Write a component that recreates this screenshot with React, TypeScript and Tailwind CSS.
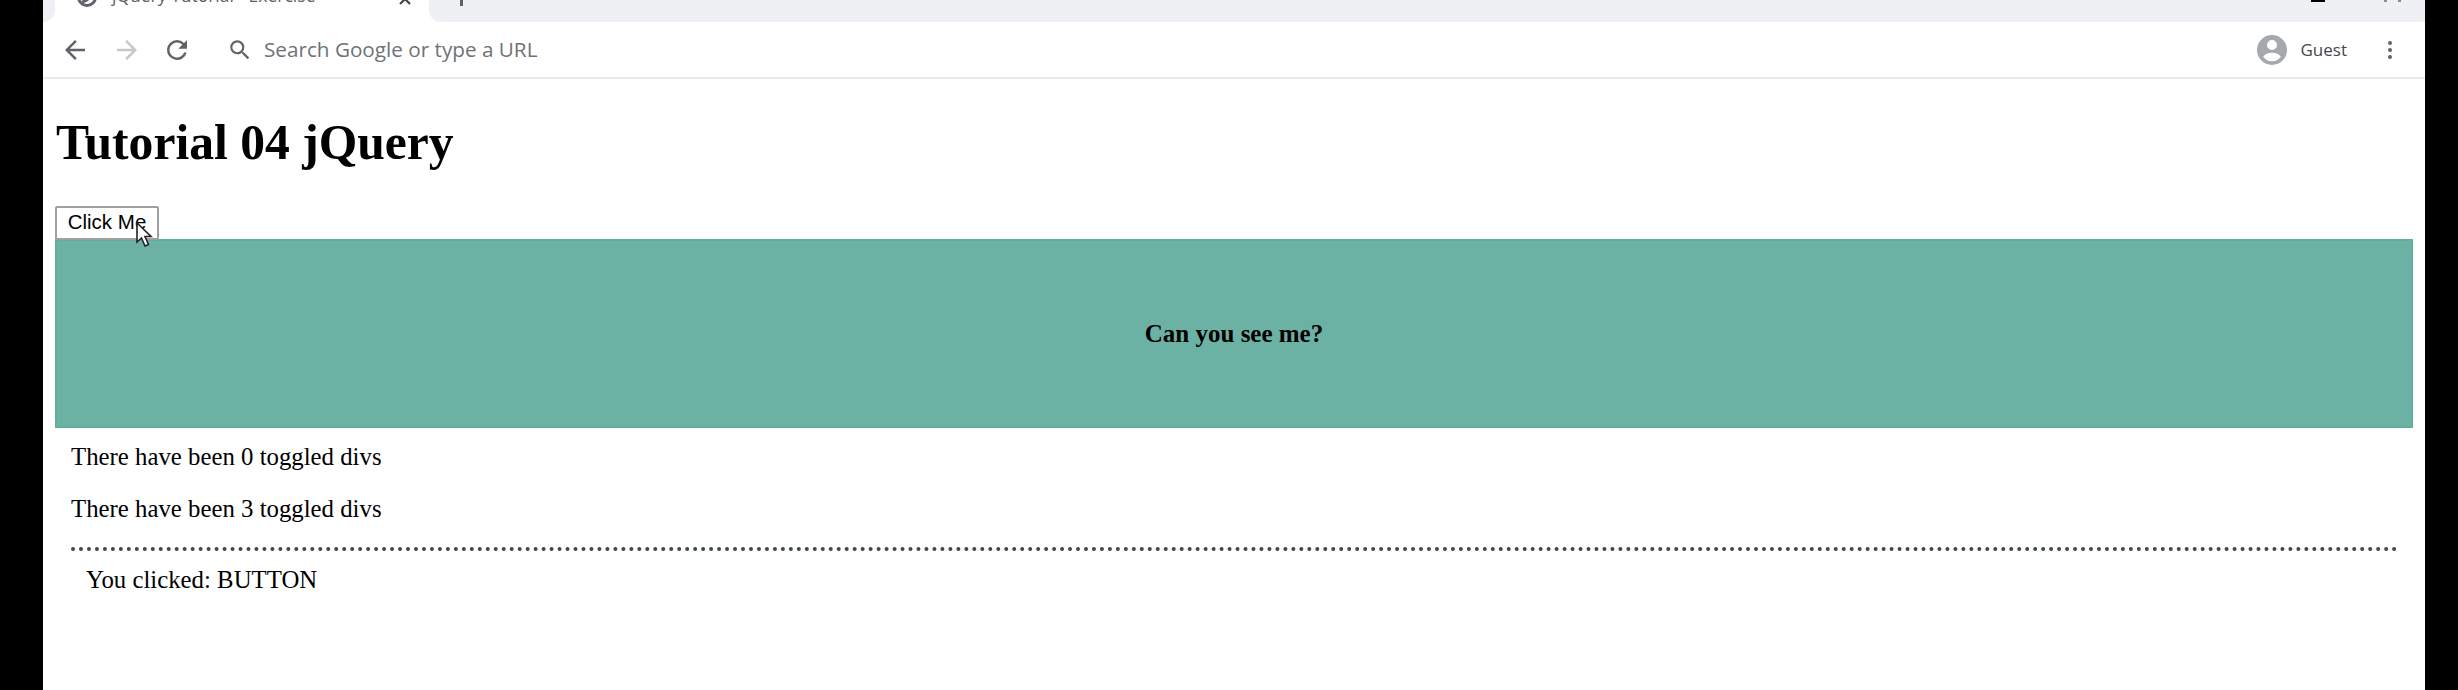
import React from "react";

const serif = { fontFamily: '"Liberation Serif", serif' };

function Back({ color }: { color: string }) {
  return (
    <svg width="30" height="30" viewBox="0 0 24 24" fill={color}>
      <path d="M20 11H7.83l5.59-5.59L12 4l-8 8 8 8 1.41-1.41L7.83 13H20v-2z" />
    </svg>
  );
}

export default function App() {
  return (
    <div className="flex h-[690px] w-[2458px] overflow-hidden bg-black">
      <div className="w-[43px] shrink-0" />
      <main className="flex w-[2382px] shrink-0 flex-col bg-white">
        <div className="flex h-[22px] shrink-0 overflow-hidden">
          <div className="h-[22px] w-[12px] rounded-br-[12px] bg-[#eef0f4]" />
          <div className="flex h-[22px] w-[374px] items-end bg-white pl-[22px]">
            <svg className="mb-[15px] shrink-0" width="20" height="20" viewBox="0 0 20 20">
              <circle cx="10" cy="10" r="8.5" fill="none" stroke="#5f6368" strokeWidth="3" />
              <path d="M5 15 Q11 14 15 7" fill="none" stroke="#5f6368" strokeWidth="3" />
            </svg>
            <span className="mb-[14px] ml-[15px] whitespace-nowrap text-[17.5px] leading-[26px] text-[#5f6368] [font-family:'Open_Sans',sans-serif]">jQuery Tutorial - Exercise</span>
            <svg className="mb-[16px] ml-[83px] shrink-0" width="14" height="14" viewBox="0 0 14 14">
              <path d="M2 2l10 10M12 2L2 12" stroke="#44484d" strokeWidth="2.2" />
            </svg>
          </div>
          <div className="flex h-[22px] flex-1 rounded-bl-[12px] bg-[#eef0f4]">
            <div className="ml-[31px] h-[6px] w-[3px] bg-[#5f6368]" />
            <div className="ml-[1848px] h-[2px] w-[14px] bg-black" />
            <div className="ml-[59px] h-[2px] w-[3px] bg-[#8a8d91]" />
            <div className="ml-[11px] h-[2px] w-[3px] bg-[#8a8d91]" />
          </div>
        </div>
        <div className="flex h-[57px] shrink-0 items-center border-b-2 border-[#e8eaef] pl-[17px] pr-[33px] pt-px">
          <Back color="#5f6368" />
          <div className="ml-[22px] rotate-180"><Back color="#c4c7cb" /></div>
          <svg className="ml-[20px]" width="30" height="30" viewBox="0 0 24 24" fill="#5f6368">
            <path d="M17.65 6.35A7.96 7.96 0 0 0 12 4a8 8 0 1 0 7.73 10h-2.08A6 6 0 1 1 12 6c1.66 0 3.14.69 4.22 1.78L13 11h7V4l-2.35 2.35z" />
          </svg>
          <svg className="ml-[35px]" width="26" height="26" viewBox="0 0 24 24" fill="#5f6368">
            <path d="M15.5 14h-.79l-.28-.27A6.47 6.47 0 0 0 16 9.5 6.5 6.5 0 1 0 9.5 16c1.61 0 3.09-.59 4.23-1.57l.27.28v.79l5 4.99L20.49 19l-4.99-5zm-6 0C7.01 14 5 11.99 5 9.5S7.01 5 9.5 5 14 7.01 14 9.5 11.99 14 9.5 14z" />
          </svg>
          <span className="ml-[11px] text-[20.7px] text-[#6f7276] [font-family:'Open_Sans',sans-serif]">Search Google or type a URL</span>
          <svg className="ml-auto" width="30" height="30" viewBox="0 0 24 24" fill="#a5a8ad">
            <path d="M12 0a12 12 0 1 0 0 24 12 12 0 0 0 0-24zm0 4a4 4 0 1 1 0 8 4 4 0 0 1 0-8zm0 17a9 9 0 0 1-7-3.4c.5-2.2 4.7-3.4 7-3.4s6.5 1.2 7 3.4A9 9 0 0 1 12 21z" />
          </svg>
          <span className="ml-[14px] text-[17px] text-[#44484d] [font-family:'Open_Sans',sans-serif]">Guest</span>
          <div className="ml-[41px] flex flex-col gap-[3px]">
            <div className="h-[4px] w-[4px] rounded-full bg-[#5f6368]" />
            <div className="h-[4px] w-[4px] rounded-full bg-[#5f6368]" />
            <div className="h-[4px] w-[4px] rounded-full bg-[#5f6368]" />
          </div>
        </div>
        <div className="flex flex-1 flex-col px-[12px]" style={serif}>
          <h1 className="ml-px mt-[34px] text-[49.6px] font-bold leading-[60px] text-black">Tutorial 04 jQuery</h1>
          <button className="relative mt-[33px] h-[34px] w-[104px] rounded-[2px] border-2 border-[#a0a0a0] bg-white pb-[2px] text-[20.5px] leading-none text-black [font-family:'Liberation_Sans',sans-serif]">
            Click Me
            <svg className="absolute left-[78px] top-[14px]" width="18" height="26" viewBox="0 0 18 26">
              <path d="M2 1v19l4.5-4 3.5 8 3.5-1.5-3.5-8h6z" fill="#fff" stroke="#222" strokeWidth="1.6" />
            </svg>
          </button>
          <div className="-mt-px flex h-[189px] items-center justify-center border-2 border-[#5fb09a] bg-[#6cb2a4] text-[25px] font-bold text-black">
            Can you see me?
          </div>
          <div className="px-[16px]">
            <p className="mt-[15px] text-[24.8px] leading-[28px] text-black">There have been 0 toggled divs</p>
            <p className="mt-[24px] text-[24.8px] leading-[28px] text-black">There have been 3 toggled divs</p>
            <div className="-mr-[2px] mt-[24px] border-t-4 border-dotted border-[#3c4a48]" />
            <p className="mt-[15px] pl-[15px] text-[24.8px] leading-[28px] text-black">You clicked: BUTTON</p>
          </div>
        </div>
      </main>
    </div>
  );
}
